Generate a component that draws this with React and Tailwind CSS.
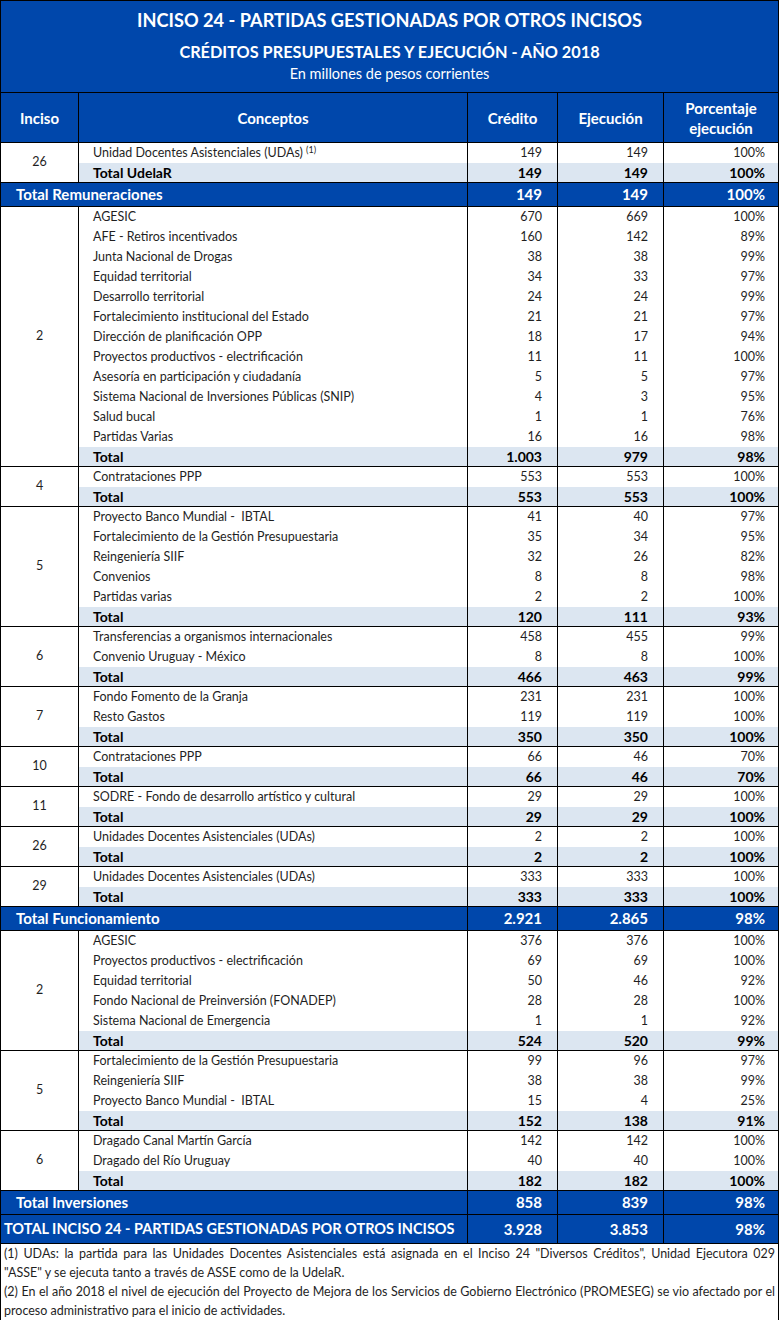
const BLUE = "bg-[#0047ab]";

const FUNCIONAMIENTO = [
  {
    inciso: "2",
    rows: [
      ["AGESIC", "670", "669", "100%"],
      ["AFE - Retiros incentivados", "160", "142", "89%"],
      ["Junta Nacional de Drogas", "38", "38", "99%"],
      ["Equidad territorial", "34", "33", "97%"],
      ["Desarrollo territorial", "24", "24", "99%"],
      ["Fortalecimiento institucional del Estado", "21", "21", "97%"],
      ["Dirección de planificación OPP", "18", "17", "94%"],
      ["Proyectos productivos - electrificación", "11", "11", "100%"],
      ["Asesoría en participación y ciudadanía", "5", "5", "97%"],
      ["Sistema Nacional de Inversiones Públicas (SNIP)", "4", "3", "95%"],
      ["Salud bucal", "1", "1", "76%"],
      ["Partidas Varias", "16", "16", "98%"],
    ],
    total: ["Total", "1.003", "979", "98%"],
  },
  {
    inciso: "4",
    rows: [["Contrataciones PPP", "553", "553", "100%"]],
    total: ["Total", "553", "553", "100%"],
  },
  {
    inciso: "5",
    rows: [
      ["Proyecto Banco Mundial -  IBTAL", "41", "40", "97%"],
      ["Fortalecimiento de la Gestión Presupuestaria", "35", "34", "95%"],
      ["Reingeniería SIIF", "32", "26", "82%"],
      ["Convenios", "8", "8", "98%"],
      ["Partidas varias", "2", "2", "100%"],
    ],
    total: ["Total", "120", "111", "93%"],
  },
  {
    inciso: "6",
    rows: [
      ["Transferencias a organismos internacionales", "458", "455", "99%"],
      ["Convenio Uruguay - México", "8", "8", "100%"],
    ],
    total: ["Total", "466", "463", "99%"],
  },
  {
    inciso: "7",
    rows: [
      ["Fondo Fomento de la Granja", "231", "231", "100%"],
      ["Resto Gastos", "119", "119", "100%"],
    ],
    total: ["Total", "350", "350", "100%"],
  },
  {
    inciso: "10",
    rows: [["Contrataciones PPP", "66", "46", "70%"]],
    total: ["Total", "66", "46", "70%"],
  },
  {
    inciso: "11",
    rows: [["SODRE - Fondo de desarrollo artístico y cultural", "29", "29", "100%"]],
    total: ["Total", "29", "29", "100%"],
  },
  {
    inciso: "26",
    rows: [["Unidades Docentes Asistenciales (UDAs)", "2", "2", "100%"]],
    total: ["Total", "2", "2", "100%"],
  },
  {
    inciso: "29",
    rows: [["Unidades Docentes Asistenciales (UDAs)", "333", "333", "100%"]],
    total: ["Total", "333", "333", "100%"],
  },
];

const INVERSIONES = [
  {
    inciso: "2",
    rows: [
      ["AGESIC", "376", "376", "100%"],
      ["Proyectos productivos - electrificación", "69", "69", "100%"],
      ["Equidad territorial", "50", "46", "92%"],
      ["Fondo Nacional de Preinversión (FONADEP)", "28", "28", "100%"],
      ["Sistema Nacional de Emergencia", "1", "1", "92%"],
    ],
    total: ["Total", "524", "520", "99%"],
  },
  {
    inciso: "5",
    rows: [
      ["Fortalecimiento de la Gestión Presupuestaria", "99", "96", "97%"],
      ["Reingeniería SIIF", "38", "38", "99%"],
      ["Proyecto Banco Mundial -  IBTAL", "15", "4", "25%"],
    ],
    total: ["Total", "152", "138", "91%"],
  },
  {
    inciso: "6",
    rows: [
      ["Dragado Canal Martín García", "142", "142", "100%"],
      ["Dragado del Río Uruguay", "40", "40", "100%"],
    ],
    total: ["Total", "182", "182", "100%"],
  },
];

const REMUNERACIONES = [
  {
    inciso: "26",
    rows: [[<>Unidad Docentes Asistenciales (UDAs) <sup className="text-[9px]">(1)</sup></>, "149", "149", "100%"]],
    total: ["Total UdelaR", "149", "149", "100%"],
  },
];

// one inciso block: number on the left spanning all its rows, detail rows, then the shaded total
function Group({ g }) {
  const all = [...g.rows, g.total];
  return (
    <div className="flex border-b border-black">
      <div className="flex w-[78px] shrink-0 items-center justify-center border-r border-black">{g.inciso}</div>
      <div className="flex-1">
        {all.map((r, i) => {
          const isTotal = i === all.length - 1;
          return (
            <div
              key={i}
              className={`grid grid-cols-[389px_90px_106px_114px] ${
                isTotal ? "h-[19px] bg-[#dce6f1] text-[14px] font-bold leading-[19px] text-black" : "h-5 leading-5"
              }`}
            >
              <div className="border-r border-black pl-[14px] whitespace-pre">{r[0]}</div>
              <div className="border-r border-black pr-[15px] text-right">{r[1]}</div>
              <div className="border-r border-black pr-[15px] text-right">{r[2]}</div>
              <div className="pr-[13px] text-right">{r[3]}</div>
            </div>
          );
        })}
      </div>
    </div>
  );
}

function BlueTotal({ label, values, big }) {
  return (
    <div
      className={`grid grid-cols-[467px_90px_106px_114px] border-b border-black ${BLUE} text-[15px] font-bold text-white ${
        big ? "h-[29px] leading-[28px]" : "h-6 leading-[23px]"
      }`}
    >
      <div className={`border-r border-black whitespace-nowrap ${big ? "pl-[3px] text-[14.5px]" : "pl-[15px]"}`}>{label}</div>
      <div className="border-r border-black pr-[15px] text-right">{values[0]}</div>
      <div className="border-r border-black pr-[15px] text-right">{values[1]}</div>
      <div className="pr-[13px] text-right">{values[2]}</div>
    </div>
  );
}

export default function App() {
  return (
    <div className="w-[779px] border-x border-t border-black bg-white font-['Lato',sans-serif] text-[12.5px] text-[#1f1f1f]">
      <div className={`${BLUE} h-[92px] border-b border-black text-center text-white`}>
        <div className="pt-[7px] text-[18.2px] font-bold leading-6">INCISO 24 - PARTIDAS GESTIONADAS POR OTROS INCISOS</div>
        <div className="mt-[10px] text-[16.3px] font-bold leading-5">CRÉDITOS PRESUPUESTALES Y EJECUCIÓN - AÑO 2018</div>
        <div className="mt-[2px] text-[14.5px] leading-5">En millones de pesos corrientes</div>
      </div>

      <div className={`grid h-[50px] grid-cols-[78px_389px_90px_106px_114px] border-b border-black ${BLUE} text-[15px] font-bold leading-5 text-white`}>
        <div className="flex items-center justify-center border-r border-black">Inciso</div>
        <div className="flex items-center justify-center border-r border-black">Conceptos</div>
        <div className="flex items-center justify-center border-r border-black">Crédito</div>
        <div className="flex items-center justify-center border-r border-black">Ejecución</div>
        <div className="flex items-center justify-center text-center">
          Porcentaje
          <br />
          ejecución
        </div>
      </div>

      {REMUNERACIONES.map((g, i) => (
        <Group key={"r" + i} g={g} />
      ))}
      <BlueTotal label="Total Remuneraciones" values={["149", "149", "100%"]} />
      {FUNCIONAMIENTO.map((g, i) => (
        <Group key={"f" + i} g={g} />
      ))}
      <BlueTotal label="Total Funcionamiento" values={["2.921", "2.865", "98%"]} />
      {INVERSIONES.map((g, i) => (
        <Group key={"i" + i} g={g} />
      ))}
      <BlueTotal label="Total Inversiones" values={["858", "839", "98%"]} />
      <BlueTotal label="TOTAL INCISO 24 - PARTIDAS GESTIONADAS POR OTROS INCISOS" values={["3.928", "3.853", "98%"]} big />

      <div className="border-b border-black px-[3px] text-[12.5px] leading-[19px] text-[#1f1f1f]">
        <div className="text-justify [text-align-last:justify]">
          (1) UDAs: la partida para las Unidades Docentes Asistenciales está asignada en el Inciso 24 "Diversos Créditos", Unidad Ejecutora 029
        </div>
        <div>"ASSE" y se ejecuta tanto a través de ASSE como de la UdelaR.</div>
        <div className="text-justify [text-align-last:justify]">
          (2) En el año 2018 el nivel de ejecución del Proyecto de Mejora de los Servicios de Gobierno Electrónico (PROMESEG) se vio afectado por el
        </div>
        <div>proceso administrativo para el inicio de actividades.</div>
      </div>
    </div>
  );
}
